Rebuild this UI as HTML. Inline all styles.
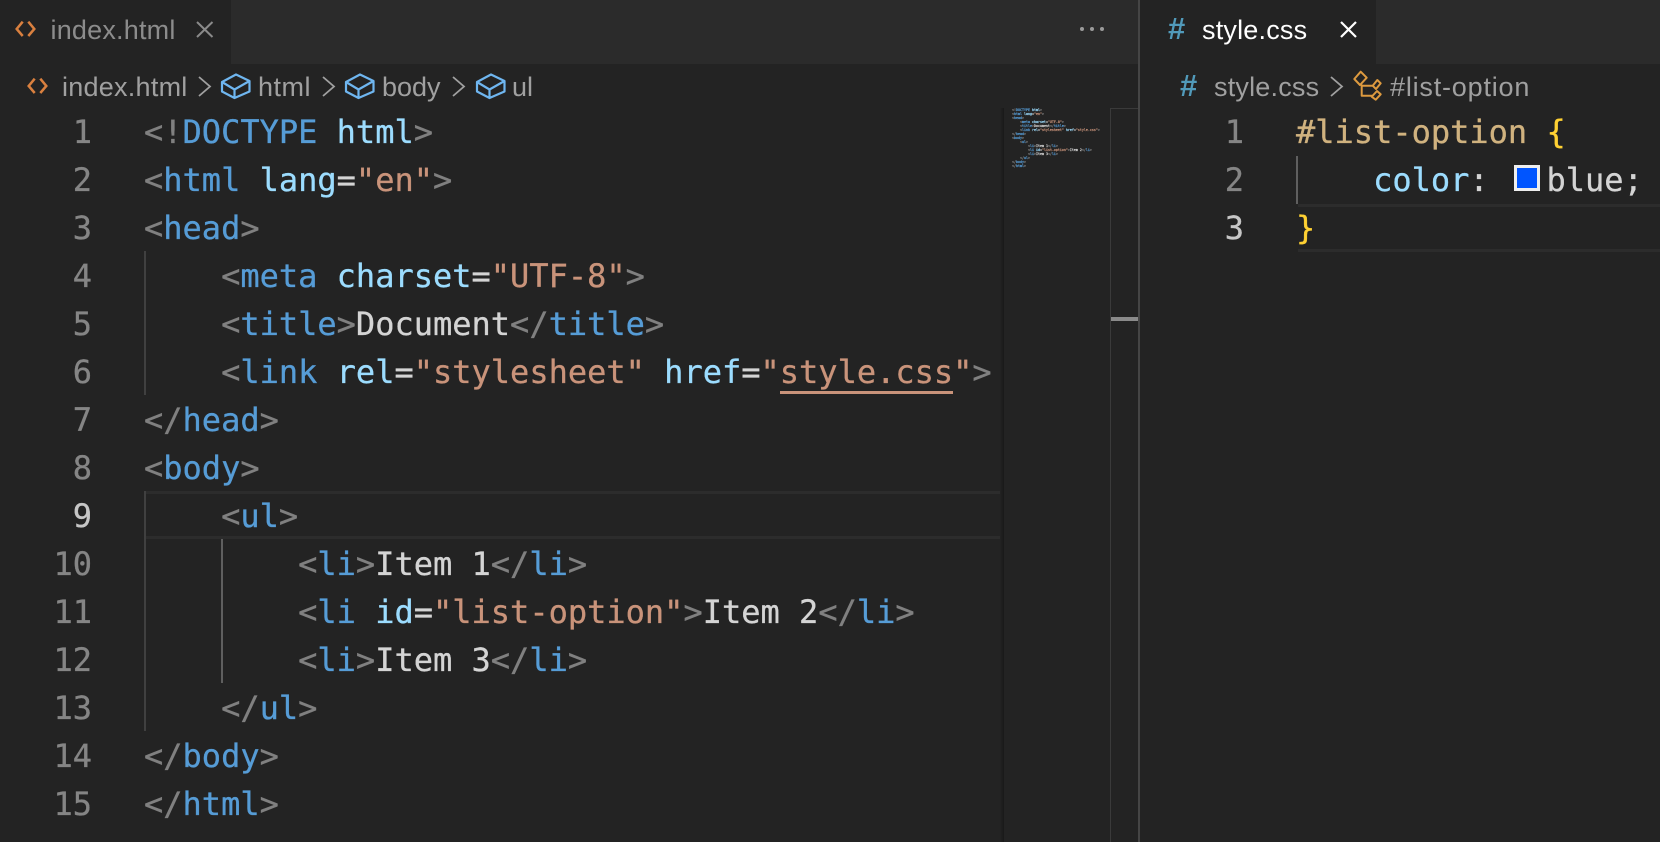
<!DOCTYPE html>
<html lang="en"><head><meta charset="utf-8"><title>VS Code</title>
<style>
html,body{margin:0;padding:0;width:1660px;height:842px;overflow:hidden;background:#222}
#r{position:relative;width:1660px;height:842px;overflow:hidden;background:#232323;font-family:"Liberation Sans",sans-serif;filter:blur(.3px)}
.a{position:absolute}
.u{position:absolute;font-size:27px;line-height:36px;white-space:nowrap}
.c{position:absolute;left:0;height:48px;margin-top:1px;font:32px/48px "DejaVu Sans Mono",monospace;white-space:pre;font-variant-ligatures:none;-webkit-text-stroke:.3px}
.n{position:absolute;text-align:right;width:60px;margin-top:1px;margin-left:1px;font:32px/48px "DejaVu Sans Mono",monospace;color:#858585;-webkit-text-stroke:.3px}
.p{color:#808080}.t{color:#569cd6}.k{color:#9cdcfe}.s{color:#c9937a}.x{color:#d4d4d4}
#m{position:absolute;left:1012px;top:108px;font:3.32px/4px "DejaVu Sans Mono",monospace;white-space:pre;-webkit-text-stroke:.2px}
svg{position:absolute;left:0;top:0}
</style></head><body><div id="r">
<div class="a" style="left:0;top:0;width:1660px;height:64px;background:#2b2b2b"></div>
<div class="a" style="left:0;top:0;width:231px;height:64px;background:#232323"></div>
<div class="a" style="left:1140px;top:0;width:236px;height:64px;background:#232323"></div>

<div class="a" style="left:144px;top:251px;width:2px;height:144px;background:#404040"></div>
<div class="a" style="left:144px;top:491px;width:2px;height:240px;background:#404040"></div>
<div class="a" style="left:221px;top:539px;width:2px;height:144px;background:#5f5f5f"></div>
<div class="a" style="left:1296px;top:156px;width:2px;height:48px;background:#5f5f5f"></div>
<div class="a" style="left:146px;top:491px;width:858px;height:48px;box-sizing:border-box;border-top:3px solid #2c2c2c;border-bottom:3px solid #2c2c2c"></div>
<div class="a" style="left:1298px;top:204px;width:362px;height:48px;box-sizing:border-box;border-top:3px solid #2c2c2c;border-bottom:3px solid #2c2c2c"></div>

<div class="u" style="left:50.500px;top:12px;color:#8c8c8c;letter-spacing:.2px">index.html</div>
<div class="u" style="left:1202px;top:12px;color:#fff;letter-spacing:.2px">style.css</div>
<div class="u" style="left:1168px;top:11px;color:#519aba;font-weight:bold;font-size:31px">#</div>
<div class="u" style="left:62px;top:69px;color:#a0a0a0;letter-spacing:.25px">index.html</div>
<div class="u" style="left:258px;top:69px;color:#a0a0a0;letter-spacing:.5px">html</div>
<div class="u" style="left:382px;top:69px;color:#a0a0a0">body</div>
<div class="u" style="left:512px;top:69px;color:#a0a0a0">ul</div>
<div class="u" style="left:1180px;top:68px;color:#519aba;font-weight:bold;font-size:31px">#</div>
<div class="u" style="left:1214px;top:69px;color:#a0a0a0;letter-spacing:.2px">style.css</div>
<div class="u" style="left:1390px;top:69px;color:#a0a0a0;letter-spacing:.8px">#list-option</div>

<svg width="1660" height="842" fill="none">
<g stroke="#d9803f" stroke-width="2.500"><path d="M22.700 21.700 16.700 29 22.700 36M28.300 21.700 34.300 29 28.300 36"/><path d="M34.700 78.700 28.700 86 34.700 93M40.300 78.700 46.300 86 40.300 93"/></g>
<path d="M197 22 212.500 37M212.500 22 197 37" stroke="#8a8a8a" stroke-width="2"/>
<path d="M1341 22 1356 37M1356 22 1341 37" stroke="#fff" stroke-width="2.200"/>
<g fill="#9a9a9a"><circle cx="1082" cy="29" r="2"/><circle cx="1092" cy="29" r="2"/><circle cx="1102" cy="29" r="2"/></g>
<g stroke="#a0a0a0" stroke-width="1.800"><path d="M199 77 210 86.500 199 96"/><path d="M323 77 334 86.500 323 96"/><path d="M453 77 464 86.500 453 96"/><path d="M1331 77 1342 86.500 1331 96"/></g>
<g stroke="#6fb6f0" stroke-width="2.200" stroke-linejoin="round">
<path d="M236 74.500 249.500 81V91.500L234.500 98 222 91.500V82L236 74.500ZM222 82 234.500 89.500 249.500 81M234.500 89.500V98"/>
<path d="M360 74.500 373.500 81V91.500L358.500 98 346 91.500V82L360 74.500ZM346 82 358.500 89.500 373.500 81M358.500 89.500V98"/>
<path d="M491 74.500 504.500 81V91.500L489.500 98 477 91.500V82L491 74.500ZM477 82 489.500 89.500 504.500 81M489.500 89.500V98"/>
</g>
<g stroke="#dd9a3f" stroke-width="2" stroke-linejoin="round"><path d="M1354.300 79 1360.700 71.700 1366.700 77.700 1360 85ZM1372.700 85.700 1377.300 80 1380.700 83.300 1376 89ZM1371.700 96.700 1377 91 1380.700 94.300 1375.700 99.700ZM1361.700 84.500V95.700H1372M1361.700 85.700H1373"/></g>
</svg>

<div class="n" style="left:31px;top:107px">1</div>
<div class="n" style="left:31px;top:155px">2</div>
<div class="n" style="left:31px;top:203px">3</div>
<div class="n" style="left:31px;top:251px">4</div>
<div class="n" style="left:31px;top:299px">5</div>
<div class="n" style="left:31px;top:347px">6</div>
<div class="n" style="left:31px;top:395px">7</div>
<div class="n" style="left:31px;top:443px">8</div>
<div class="n" style="left:31px;top:491px;color:#c6c6c6">9</div>
<div class="n" style="left:31px;top:539px">10</div>
<div class="n" style="left:31px;top:587px">11</div>
<div class="n" style="left:31px;top:635px">12</div>
<div class="n" style="left:31px;top:683px">13</div>
<div class="n" style="left:31px;top:731px">14</div>
<div class="n" style="left:31px;top:779px">15</div>
<div class="n" style="left:1183px;top:107px">1</div>
<div class="n" style="left:1183px;top:155px">2</div>
<div class="n" style="left:1183px;top:203px;color:#c6c6c6">3</div>

<div class="c" style="left:144px;top:107px"><span class="p">&lt;!</span><span class="t">DOCTYPE</span> <span class="k">html</span><span class="p">&gt;</span></div>
<div class="c" style="left:144px;top:155px"><span class="p">&lt;</span><span class="t">html</span> <span class="k">lang</span><span class="x">=</span><span class="s">"en"</span><span class="p">&gt;</span></div>
<div class="c" style="left:144px;top:203px"><span class="p">&lt;</span><span class="t">head</span><span class="p">&gt;</span></div>
<div class="c" style="left:144px;top:251px">    <span class="p">&lt;</span><span class="t">meta</span> <span class="k">charset</span><span class="x">=</span><span class="s">"UTF-8"</span><span class="p">&gt;</span></div>
<div class="c" style="left:144px;top:299px">    <span class="p">&lt;</span><span class="t">title</span><span class="p">&gt;</span><span class="x">Document</span><span class="p">&lt;/</span><span class="t">title</span><span class="p">&gt;</span></div>
<div class="c" style="left:144px;top:347px">    <span class="p">&lt;</span><span class="t">link</span> <span class="k">rel</span><span class="x">=</span><span class="s">"stylesheet"</span> <span class="k">href</span><span class="x">=</span><span class="s">"style.css"</span><span class="p">&gt;</span></div>
<div class="a" style="left:780px;top:391px;width:173px;height:3px;background:#c9937a"></div>
<div class="c" style="left:144px;top:395px"><span class="p">&lt;/</span><span class="t">head</span><span class="p">&gt;</span></div>
<div class="c" style="left:144px;top:443px"><span class="p">&lt;</span><span class="t">body</span><span class="p">&gt;</span></div>
<div class="c" style="left:144px;top:491px">    <span class="p">&lt;</span><span class="t">ul</span><span class="p">&gt;</span></div>
<div class="c" style="left:144px;top:539px">        <span class="p">&lt;</span><span class="t">li</span><span class="p">&gt;</span><span class="x">Item 1</span><span class="p">&lt;/</span><span class="t">li</span><span class="p">&gt;</span></div>
<div class="c" style="left:144px;top:587px">        <span class="p">&lt;</span><span class="t">li</span> <span class="k">id</span><span class="x">=</span><span class="s">"list-option"</span><span class="p">&gt;</span><span class="x">Item 2</span><span class="p">&lt;/</span><span class="t">li</span><span class="p">&gt;</span></div>
<div class="c" style="left:144px;top:635px">        <span class="p">&lt;</span><span class="t">li</span><span class="p">&gt;</span><span class="x">Item 3</span><span class="p">&lt;/</span><span class="t">li</span><span class="p">&gt;</span></div>
<div class="c" style="left:144px;top:683px">    <span class="p">&lt;/</span><span class="t">ul</span><span class="p">&gt;</span></div>
<div class="c" style="left:144px;top:731px"><span class="p">&lt;/</span><span class="t">body</span><span class="p">&gt;</span></div>
<div class="c" style="left:144px;top:779px"><span class="p">&lt;/</span><span class="t">html</span><span class="p">&gt;</span></div>

<div class="c" style="left:1296px;top:107px"><span style="color:#d0b27f">#list-option</span> <span style="color:#ffd133">{</span></div>
<div class="c" style="left:1296px;top:155px">    <span class="k">color</span><span class="x">:</span></div>
<div class="a" style="left:1514px;top:165px;width:26px;height:26px;box-sizing:border-box;border:3px solid #eee;background:#0055ff"></div>
<div class="c" style="left:1546.500px;top:155px"><span class="x">blue;</span></div>
<div class="c" style="left:1296px;top:203px"><span style="color:#ffd133">}</span></div>

<div class="a" style="left:1000px;top:108px;width:4px;height:734px;background:linear-gradient(90deg,#232323,#191919)"></div>
<div class="a" style="left:1110px;top:108px;width:1px;height:734px;background:#3a3a3a"></div>
<div class="a" style="left:1110px;top:108px;width:29px;height:1px;background:#3a3a3a"></div>
<div class="a" style="left:1111px;top:317px;width:27px;height:4px;background:#8a8a8a"></div>
<div class="a" style="left:1138px;top:0;width:2px;height:842px;background:#454545"></div>

<div id="m"><span class="p">&lt;!</span><span class="t">DOCTYPE</span> <span class="k">html</span><span class="p">&gt;</span>
<span class="p">&lt;</span><span class="t">html</span> <span class="k">lang</span><span class="x">=</span><span class="s">"en"</span><span class="p">&gt;</span>
<span class="p">&lt;</span><span class="t">head</span><span class="p">&gt;</span>
    <span class="p">&lt;</span><span class="t">meta</span> <span class="k">charset</span><span class="x">=</span><span class="s">"UTF-8"</span><span class="p">&gt;</span>
    <span class="p">&lt;</span><span class="t">title</span><span class="p">&gt;</span><span class="x">Document</span><span class="p">&lt;/</span><span class="t">title</span><span class="p">&gt;</span>
    <span class="p">&lt;</span><span class="t">link</span> <span class="k">rel</span><span class="x">=</span><span class="s">"stylesheet"</span> <span class="k">href</span><span class="x">=</span><span class="s">"style.css"</span><span class="p">&gt;</span>
<span class="p">&lt;/</span><span class="t">head</span><span class="p">&gt;</span>
<span class="p">&lt;</span><span class="t">body</span><span class="p">&gt;</span>
    <span class="p">&lt;</span><span class="t">ul</span><span class="p">&gt;</span>
        <span class="p">&lt;</span><span class="t">li</span><span class="p">&gt;</span><span class="x">Item 1</span><span class="p">&lt;/</span><span class="t">li</span><span class="p">&gt;</span>
        <span class="p">&lt;</span><span class="t">li</span> <span class="k">id</span><span class="x">=</span><span class="s">"list-option"</span><span class="p">&gt;</span><span class="x">Item 2</span><span class="p">&lt;/</span><span class="t">li</span><span class="p">&gt;</span>
        <span class="p">&lt;</span><span class="t">li</span><span class="p">&gt;</span><span class="x">Item 3</span><span class="p">&lt;/</span><span class="t">li</span><span class="p">&gt;</span>
    <span class="p">&lt;/</span><span class="t">ul</span><span class="p">&gt;</span>
<span class="p">&lt;/</span><span class="t">body</span><span class="p">&gt;</span>
<span class="p">&lt;/</span><span class="t">html</span><span class="p">&gt;</span></div>
</div></body></html>
